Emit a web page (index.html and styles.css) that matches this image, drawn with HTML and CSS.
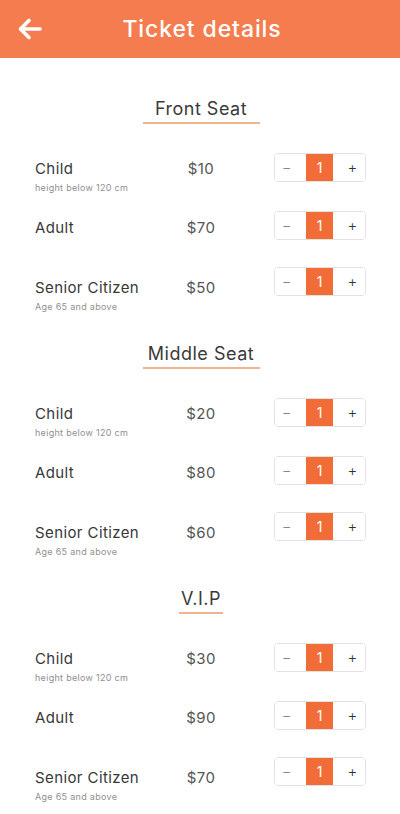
FILE: index.html
```html
<!DOCTYPE html>
<html lang="en">
<head>
  <meta charset="UTF-8" />
  <meta name="viewport" content="width=device-width, initial-scale=1.0" />
  <title>Ticket details</title>
  <link rel="stylesheet" href="styles.css">
</head>
<body>
  <header class="topbar">
    <a href="#" class="back" aria-label="Back">
      <svg width="26" height="24" viewBox="0 0 26 24" fill="none" stroke="#ffffff" stroke-width="3.6" stroke-linecap="round" stroke-linejoin="round">
        <path d="M23 12H4" />
        <path d="M12 3.5L3.5 12L12 20.5" />
      </svg>
    </a>
    <h1>Ticket details</h1>
  </header>

  <main class="content">
    <section class="seat">
      <h2 class="seat-title"><span>Front Seat</span></h2>
      <div class="row row-child">
        <div class="info"><div class="label">Child</div><div class="sub">height below 120 cm</div></div>
        <div class="price">$10</div>
        <div class="stepper"><button>&minus;</button><span class="qty">1</span><button>+</button></div>
      </div>
      <div class="row row-adult">
        <div class="info"><div class="label">Adult</div></div>
        <div class="price">$70</div>
        <div class="stepper"><button>&minus;</button><span class="qty">1</span><button>+</button></div>
      </div>
      <div class="row row-senior">
        <div class="info"><div class="label">Senior Citizen</div><div class="sub">Age 65 and above</div></div>
        <div class="price">$50</div>
        <div class="stepper"><button>&minus;</button><span class="qty">1</span><button>+</button></div>
      </div>
    </section>

    <section class="seat">
      <h2 class="seat-title"><span>Middle Seat</span></h2>
      <div class="row row-child">
        <div class="info"><div class="label">Child</div><div class="sub">height below 120 cm</div></div>
        <div class="price">$20</div>
        <div class="stepper"><button>&minus;</button><span class="qty">1</span><button>+</button></div>
      </div>
      <div class="row row-adult">
        <div class="info"><div class="label">Adult</div></div>
        <div class="price">$80</div>
        <div class="stepper"><button>&minus;</button><span class="qty">1</span><button>+</button></div>
      </div>
      <div class="row row-senior">
        <div class="info"><div class="label">Senior Citizen</div><div class="sub">Age 65 and above</div></div>
        <div class="price">$60</div>
        <div class="stepper"><button>&minus;</button><span class="qty">1</span><button>+</button></div>
      </div>
    </section>

    <section class="seat">
      <h2 class="seat-title"><span class="short">V.I.P</span></h2>
      <div class="row row-child">
        <div class="info"><div class="label">Child</div><div class="sub">height below 120 cm</div></div>
        <div class="price">$30</div>
        <div class="stepper"><button>&minus;</button><span class="qty">1</span><button>+</button></div>
      </div>
      <div class="row row-adult">
        <div class="info"><div class="label">Adult</div></div>
        <div class="price">$90</div>
        <div class="stepper"><button>&minus;</button><span class="qty">1</span><button>+</button></div>
      </div>
      <div class="row row-senior">
        <div class="info"><div class="label">Senior Citizen</div><div class="sub">Age 65 and above</div></div>
        <div class="price">$70</div>
        <div class="stepper"><button>&minus;</button><span class="qty">1</span><button>+</button></div>
      </div>
    </section>
  </main>
</body>
</html>
```

FILE: styles.css
```css
* {
  margin: 0;
  padding: 0;
  box-sizing: border-box;
}

html, body {
  font-family: 'Inter', 'Open Sans', sans-serif;
  background: #ffffff;
  color: #333333;
  overflow: hidden;
}

/* Header */
.topbar {
  height: 58px;
  background: #f47c4f;
  display: flex;
  align-items: center;
  justify-content: center;
  position: relative;
}

.back {
  position: absolute;
  left: 17px;
  top: 17px;
  display: flex;
}

.topbar h1 {
  color: #ffffff;
  font-size: 23px;
  font-weight: 500;
  letter-spacing: 0.9px;
  margin-left: 4px;
}

/* Sections */
.content {
  padding-top: 20px;
}

.seat {
  padding-top: 18px;
}

.seat-title {
  text-align: center;
  font-size: 18px;
  font-weight: 400;
  letter-spacing: 0.5px;
  color: #3a3a3a;
  line-height: 24px;
}

.seat-title span {
  display: inline-block;
  width: 117px;
  padding-top: 1px;
  padding-bottom: 1px;
  border-bottom: 2px solid #eeb593;
  margin-left: 2px;
}

.seat-title span.short {
  width: 44px;
}

.row {
  display: flex;
  align-items: flex-start;
  padding: 0 34px 0 35px;
  height: 56px;
}

.seat-title + .row {
  margin-top: 29px;
  height: 58px;
}

.info {
  width: 130px;
  padding-top: 7px;
}

.price {
  width: 72px;
  text-align: center;
  padding-top: 7px;
  font-size: 15px;
  line-height: 20px;
  letter-spacing: 0.4px;
  color: #555555;
}

.row-child .info,
.row-child .price {
  padding-top: 6px;
}

.row-senior .info,
.row-senior .price {
  padding-top: 11px;
}

.label {
  font-size: 15px;
  line-height: 20px;
  letter-spacing: 0.4px;
  color: #383838;
}

.sub {
  font-size: 9px;
  line-height: 12px;
  letter-spacing: 0.3px;
  margin-top: 3px;
  color: #8f8f8f;
}

/* Quantity stepper */
.stepper {
  margin-left: auto;
  display: flex;
  width: 92px;
  height: 29px;
  border: 1px solid #e2e2e2;
  border-radius: 4px;
  overflow: hidden;
}

.stepper button {
  border: none;
  background: #ffffff;
  color: #555555;
  font-family: inherit;
  font-size: 15px;
  font-weight: 300;
  width: 32px;
}

.stepper button:first-child {
  color: #888888;
  padding-right: 8px;
}

.stepper button:last-child {
  width: 33px;
  color: #333333;
  padding-left: 7px;
}

.qty {
  width: 27px;
  background: #f26c37;
  color: #ffffff;
  font-size: 14px;
  display: flex;
  align-items: center;
  justify-content: center;
}
```
